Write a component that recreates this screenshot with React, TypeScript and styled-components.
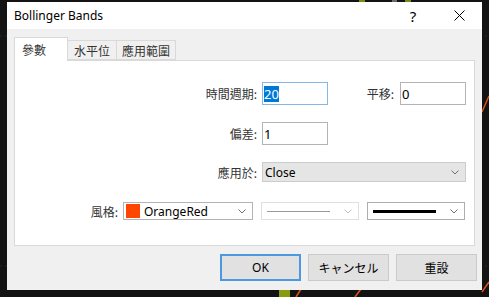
import React from "react";
import styled, { createGlobalStyle } from "styled-components";

const Global = createGlobalStyle`
  html, body { margin: 0; padding: 0; }
  body {
    width: 489px; height: 297px; overflow: hidden;
    background: #131313;
    font-family: "Noto Sans", "Noto Sans CJK TC", sans-serif;
    font-size: 12px; color: #1a1a1a;
  }
`;

const Desktop = styled.div`
  position: relative;
  width: 489px;
  height: 297px;
  overflow: hidden;
  background: #131313;
`;

const Chart = styled.svg`
  position: absolute;
  left: 0; top: 0;
`;

const Window = styled.div`
  position: absolute;
  left: 7px; top: 2px;
  width: 475px; height: 288px;
  display: flex;
  flex-direction: column;
  background: #f0f0f0;
`;

const TitleBar = styled.div`
  height: 27px;
  flex: none;
  display: flex;
  align-items: center;
  background: #ffffff;
  padding-left: 7px;
`;

const Title = styled.div`
  flex: 1;
  font-size: 12px;
  color: #000;
  font-family: "Noto Sans", sans-serif;
  margin-top: -1px;
`;

const TitleButton = styled.div<{ $w: number }>`
  width: ${(p) => p.$w}px;
  height: 27px;
  display: flex;
  align-items: center;
  justify-content: center;
  color: #000;
  font-size: 15px;
  font-family: "Noto Sans", sans-serif;
`;

const Body = styled.div`
  flex: 1;
  display: flex;
  flex-direction: column;
  padding: 8px 5px 9px 7px;
`;

const TabStrip = styled.div`
  height: 23px;
  display: flex;
  align-items: flex-end;
  position: relative;
  z-index: 1;
`;

const Tab = styled.div<{ $active?: boolean; $w: number }>`
  width: ${(p) => p.$w}px;
  height: ${(p) => (p.$active ? 24 : 20)}px;
  box-sizing: border-box;
  border: 1px solid #d9d9d9;
  border-bottom: ${(p) => (p.$active ? "none" : "1px solid #d9d9d9")};
  border-left: ${(p) => (p.$active ? "1px solid #d9d9d9" : "none")};
  background: ${(p) => (p.$active ? "#ffffff" : "#f0f0f0")};
  margin-bottom: ${(p) => (p.$active ? -1 : 0)}px;
  display: flex;
  align-items: ${(p) => (p.$active ? "flex-start" : "center")};
  justify-content: ${(p) => (p.$active ? "flex-start" : "center")};
  padding-top: ${(p) => (p.$active ? 3 : 0)}px;
  padding-left: ${(p) => (p.$active ? 7 : 0)}px;
  font-family: "Noto Sans CJK TC", sans-serif;
  font-size: 12px;
  color: #333;
`;

const Panel = styled.div`
  width: 461px;
  height: 186px;
  box-sizing: border-box;
  background: #ffffff;
  border: 1px solid #d9d9d9;
  display: flex;
  flex-direction: column;
`;

const Row = styled.div<{ $mt: number; $h: number }>`
  display: flex;
  align-items: center;
  height: ${(p) => p.$h}px;
  margin-top: ${(p) => p.$mt}px;
`;

const Label = styled.div<{ $w: number; $gap: number }>`
  width: ${(p) => p.$w}px;
  margin-right: ${(p) => p.$gap}px;
  text-align: right;
  font-family: "Noto Sans CJK TC", sans-serif;
  font-size: 12px;
  color: #333;
  white-space: nowrap;
  flex: none;
`;

const Field = styled.div<{ $focused?: boolean }>`
  width: 66px;
  height: 23px;
  box-sizing: border-box;
  border: 1px solid ${(p) => (p.$focused ? "#84b7e8" : "#b4b4b4")};
  background: #fff;
  display: flex;
  align-items: center;
  padding-left: 1px;
  font-family: "Noto Sans", sans-serif;
  font-size: 13px;
  color: #000;
  flex: none;
`;

const Selected = styled.span`
  background: #0078d7;
  color: #fff;
  line-height: 16px;
`;

const Select = styled.div<{ $w: number; $bg?: string; $border?: string }>`
  width: ${(p) => p.$w}px;
  height: 100%;
  box-sizing: border-box;
  border: 1px solid ${(p) => p.$border || "#b4b4b4"};
  background: ${(p) => p.$bg || "#fff"};
  display: flex;
  align-items: center;
  padding: 0 6px 0 1px;
  font-family: "Noto Sans", sans-serif;
  font-size: 12px;
  color: #000;
  flex: none;
`;

const SelectText = styled.div`
  flex: 1;
  padding-left: 1px;
`;

const Swatch = styled.div`
  width: 14px;
  height: 14px;
  background: #ff4500;
  margin: 0 3px 0 1px;
`;

const LineSample = styled.div<{ $thick: number; $color: string }>`
  flex: 1;
  height: ${(p) => p.$thick}px;
  background: ${(p) => p.$color};
  margin: 0 14px 0 4px;
`;

const Spacer = styled.div<{ $w: number }>`
  width: ${(p) => p.$w}px;
  flex: none;
`;

const Buttons = styled.div`
  display: flex;
  justify-content: flex-end;
  gap: 7px;
  margin-top: 8px;
`;

const Button = styled.div<{ $default?: boolean }>`
  width: 81px;
  height: 27px;
  box-sizing: border-box;
  border: ${(p) => (p.$default ? "2px solid #4b9ae0" : "1px solid #cacaca")};
  background: #e1e1e1;
  display: flex;
  align-items: center;
  justify-content: center;
  font-family: "Noto Sans", "Noto Sans CJK JP", sans-serif;
  font-size: 12px;
  color: #000;
`;

const Chevron = ({ color = "#707070" }: { color?: string }) => (
  <svg width="8" height="5" viewBox="0 0 8 5">
    <path d="M0.5 0.5 L4 4 L7.5 0.5" fill="none" stroke={color} strokeWidth="1" />
  </svg>
);

export default function App() {
  return (
    <Desktop>
      <Global />
      <Chart width="489" height="297" viewBox="0 0 489 297">
        <line x1="0" y1="266" x2="489" y2="266" stroke="#262626" strokeDasharray="2 3" />
        <line x1="0" y1="36" x2="489" y2="36" stroke="#262626" strokeDasharray="2 3" />
        <rect x="359" y="0" width="6" height="3" fill="#7a8a1a" />
        <rect x="392" y="0" width="5" height="3" fill="#6b6b6b" />
        <rect x="405" y="0" width="6" height="3" fill="#7a8a1a" />
        <rect x="279" y="290" width="11" height="7" fill="#8a9a10" />
        <line x1="296" y1="297" x2="301" y2="289" stroke="#e0501a" strokeWidth="1.5" />
        <line x1="355" y1="297" x2="361" y2="289" stroke="#e0501a" strokeWidth="1.5" />
        <line x1="482" y1="112" x2="489" y2="96" stroke="#e0501a" strokeWidth="1.5" />
        <line x1="482" y1="292" x2="489" y2="282" stroke="#e0501a" strokeWidth="1.5" />
      </Chart>
      <Window>
        <TitleBar>
          <Title>Bollinger Bands</Title>
          <TitleButton $w={46}>?</TitleButton>
          <TitleButton $w={46}>
            <svg width="11" height="11" viewBox="0 0 11 11">
              <path d="M0.5 0.5 L10.5 10.5 M10.5 0.5 L0.5 10.5" stroke="#000" strokeWidth="1" fill="none" />
            </svg>
          </TitleButton>
        </TitleBar>
        <Body>
          <TabStrip>
            <Tab $active $w={54}>參數</Tab>
            <Tab $w={49}>水平位</Tab>
            <Tab $w={59}>應用範圍</Tab>
          </TabStrip>
          <Panel>
            <Row $mt={21} $h={23}>
              <Label $w={242} $gap={5}>時間週期:</Label>
              <Field $focused>
                <Selected>20</Selected>
              </Field>
              <Label $w={66} $gap={6}>平移:</Label>
              <Field>0</Field>
            </Row>
            <Row $mt={17} $h={23}>
              <Label $w={242} $gap={5}>偏差:</Label>
              <Field>1</Field>
            </Row>
            <Row $mt={17} $h={20}>
              <Label $w={242} $gap={5}>應用於:</Label>
              <Select $w={204} $bg="#e5e5e5" $border="#cccccc">
                <SelectText>Close</SelectText>
                <Chevron />
              </Select>
            </Row>
            <Row $mt={20} $h={18}>
              <Label $w={103} $gap={5}>風格:</Label>
              <Select $w={130}>
                <Swatch />
                <SelectText>OrangeRed</SelectText>
                <Chevron />
              </Select>
              <Spacer $w={8} />
              <Select $w={98} $border="#e0e0e0">
                <LineSample $thick={1} $color="#9a9a9a" />
                <Chevron color="#c0c0c0" />
              </Select>
              <Spacer $w={8} />
              <Select $w={98} $border="#adadad">
                <LineSample $thick={3} $color="#000" />
                <Chevron />
              </Select>
            </Row>
          </Panel>
          <Buttons>
            <Button $default>OK</Button>
            <Button>キャンセル</Button>
            <Button>重設</Button>
          </Buttons>
        </Body>
      </Window>
    </Desktop>
  );
}
